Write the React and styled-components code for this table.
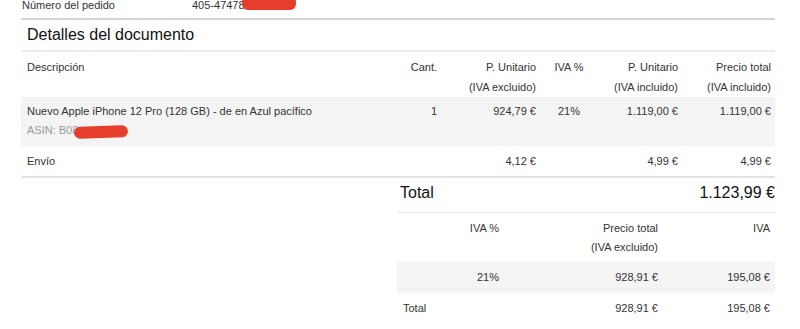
import React from "react";
import styled, { createGlobalStyle } from "styled-components";

const GlobalStyle = createGlobalStyle`
  body {
    margin: 0;
    background: #fff;
    font-family: "Liberation Sans", Arial, sans-serif;
    color: #333;
  }
`;

const Page = styled.div`
  width: 754px;
  margin-left: 21px;
  overflow: hidden;
`;

const OrderRow = styled.div`
  display: flex;
  margin-top: -2px;
  padding: 0 0 6px 1px;
  font-size: 11px;
  line-height: 14px;
  border-bottom: 2px solid #d4d4d4;
`;

const OrderLabel = styled.div`
  width: 170px;
`;

const OrderValue = styled.div`
  display: flex;
  align-items: center;
`;

const Redact = styled.span`
  display: inline-block;
  width: ${({ $w }) => $w}px;
  height: ${({ $h }) => $h}px;
  margin-left: ${({ $ml }) => $ml || 0}px;
  margin-top: ${({ $mt }) => $mt || 0}px;
  background: #e53f2b;
  border-radius: 6px;
  transform: rotate(${({ $rot }) => $rot || 0}deg);
  vertical-align: middle;
`;

const SectionTitle = styled.h2`
  margin: 0;
  padding: 0 6px;
  font-size: 16px;
  font-weight: 400;
  line-height: 30px;
  color: #111;
  border-bottom: 2px solid #ececec;
`;

const ItemRow = styled.div`
  display: grid;
  grid-template-columns: 359px 61px 99px 58px 84px 93px;
  font-size: 11px;
  line-height: ${({ $lh }) => $lh || 20}px;
  padding: ${({ $pad }) => $pad};
  background: ${({ $shaded }) => ($shaded ? "#f4f4f4" : "transparent")};
  border-bottom: ${({ $rule }) => ($rule ? "2px solid #e2e2e2" : "none")};
`;

const Cell = styled.div`
  text-align: ${({ $align }) => $align || "right"};
  padding: ${({ $align }) => ($align === "left" ? "0 0 0 6px" : $align === "center" ? "0" : "0 4px 0 0")};
  white-space: nowrap;
`;

const Muted = styled.div`
  color: #9a9a9a;
  display: flex;
  align-items: center;
`;

const Summary = styled.div`
  width: 378px;
  margin-left: 376px;
`;

const GrandTotal = styled.div`
  display: flex;
  justify-content: space-between;
  padding: 3px 0 7px 3px;
  font-size: 16px;
  line-height: 24px;
  color: #111;
  border-bottom: 1px solid #ececec;
`;

const TaxRow = styled.div`
  display: grid;
  grid-template-columns: 107px 159px 112px;
  font-size: 11px;
  line-height: ${({ $lh }) => $lh || 20}px;
  padding: ${({ $pad }) => $pad};
  background: ${({ $shaded }) => ($shaded ? "#f4f4f4" : "transparent")};
  border-bottom: ${({ $rule }) => ($rule ? "2px solid #fafafa" : "none")};
`;

const TaxCell = styled.div`
  text-align: ${({ $align }) => $align || "right"};
  padding: ${({ $align }) => ($align === "left" ? "0 0 0 6px" : "0 5px 0 0")};
  white-space: nowrap;
`;

export default function App() {
  return (
    <>
      <GlobalStyle />
      <Page>
        <OrderRow>
          <OrderLabel>Número del pedido</OrderLabel>
          <OrderValue>
            405-47478
            <Redact $w={54} $h={14} $ml={-3} $mt={-5} />
          </OrderValue>
        </OrderRow>

        <SectionTitle>Detalles del documento</SectionTitle>

        <ItemRow $pad="5px 0 0">
          <Cell $align="left">Descripción</Cell>
          <Cell>Cant.</Cell>
          <Cell>
            P. Unitario
            <br />
            (IVA excluido)
          </Cell>
          <Cell $align="center">IVA %</Cell>
          <Cell>
            P. Unitario
            <br />
            (IVA incluido)
          </Cell>
          <Cell>
            Precio total
            <br />
            (IVA incluido)
          </Cell>
        </ItemRow>

        <ItemRow $shaded $lh={19} $pad="5px 0 6px">
          <Cell $align="left">
            Nuevo Apple iPhone 12 Pro (128 GB) - de en Azul pacífico
            <Muted>
              ASIN: B08
              <Redact $w={54} $h={12} $ml={-4} $mt={3} $rot={-2} />
            </Muted>
          </Cell>
          <Cell>1</Cell>
          <Cell>924,79 €</Cell>
          <Cell $align="center">21%</Cell>
          <Cell>1.119,00 €</Cell>
          <Cell>1.119,00 €</Cell>
        </ItemRow>

        <ItemRow $rule $pad="5px 0 5px">
          <Cell $align="left">Envío</Cell>
          <Cell />
          <Cell>4,12 €</Cell>
          <Cell />
          <Cell>4,99 €</Cell>
          <Cell>4,99 €</Cell>
        </ItemRow>

        <Summary>
          <GrandTotal>
            <span>Total</span>
            <span>1.123,99 €</span>
          </GrandTotal>

          <TaxRow $lh={19} $pad="6px 0 5px">
            <TaxCell>IVA %</TaxCell>
            <TaxCell>
              Precio total
              <br />
              (IVA excluido)
            </TaxCell>
            <TaxCell>IVA</TaxCell>
          </TaxRow>

          <TaxRow $shaded $rule $pad="5px 0 5px">
            <TaxCell>21%</TaxCell>
            <TaxCell>928,91 €</TaxCell>
            <TaxCell>195,08 €</TaxCell>
          </TaxRow>

          <TaxRow $pad="4px 0 6px">
            <TaxCell $align="left">Total</TaxCell>
            <TaxCell>928,91 €</TaxCell>
            <TaxCell>195,08 €</TaxCell>
          </TaxRow>
        </Summary>
      </Page>
    </>
  );
}
